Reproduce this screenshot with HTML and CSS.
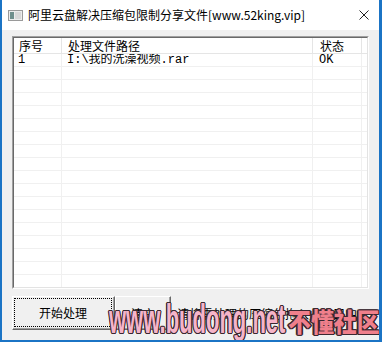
FILE: index.html
```html
<!DOCTYPE html>
<html lang="zh-CN">
<head>
  <meta charset="UTF-8">
  <title>阿里云盘解决压缩包限制分享文件</title>
  <link rel="stylesheet" href="styles.css">
</head>
<body>
  <div class="window">
    <div class="titlebar">
      <svg class="app-icon" width="15" height="11" viewBox="0 0 15 11">
        <rect x="0.5" y="0.5" width="14" height="10" fill="#ececec" stroke="#9a9a9a"/>
        <rect x="2" y="2" width="4" height="7" fill="#6f8f8c"/>
        <rect x="7" y="2" width="6" height="7" fill="#d8d8d8"/>
      </svg>
      <span class="title">阿里云盘解决压缩包限制分享文件[www.52king.vip]</span>
      <svg class="close" width="10" height="10" viewBox="0 0 10 10">
        <path d="M0.5 0.5 L9.5 9.5 M9.5 0.5 L0.5 9.5" stroke="#222" stroke-width="1"/>
      </svg>
    </div>

    <div class="client">
      <div class="listview">
        <div class="lv-frame">
          <div class="lv-head">
            <div class="cell c-no">序号</div>
            <div class="cell c-path">处理文件路径</div>
            <div class="cell c-state">状态</div>
          </div>
          <div class="lv-body">
            <div class="row">
              <div class="cell c-no">1</div>
              <div class="cell c-path">I:\我的洗澡视频.rar</div>
              <div class="cell c-state">OK</div>
            </div>
          </div>
        </div>
      </div>

      <div class="footer">
        <button class="btn btn-default"><span class="focus">开始处理</span></button>
        <button class="btn btn-clear">清空</button>
        <span class="hint">请将需处理的压缩包拖入此窗口中</span>
      </div>
    </div>

    <div class="wm wm-url">www.budong.net</div>
    <div class="wm wm-name">不懂社区</div>
  </div>
</body>
</html>
```

FILE: styles.css
```css
body {
  margin: 0;
  background: #fff;
}

.window {
  position: relative;
  width: 382px;
  height: 342px;
  box-sizing: border-box;
  border-left: 2px solid #1b74c5;
  border-right: 3px solid #1b74c5;
  border-bottom: 2px solid #1b74c5;
  background: #f0f0f0;
  display: flex;
  flex-direction: column;
  font-family: "Noto Sans CJK SC", sans-serif;
  font-size: 12px;
  color: #000;
  overflow: hidden;
}

.titlebar {
  height: 30px;
  background: #fff;
  display: flex;
  align-items: center;
  padding-left: 6px;
}

.app-icon {
  margin-right: 5px;
}

.title {
  font-size: 12px;
  line-height: 16px;
  white-space: nowrap;
}

.close {
  margin-left: auto;
  margin-right: 10px;
}

.client {
  flex: 1;
  padding: 6px 10px 0;
  display: flex;
  flex-direction: column;
}

/* list view, sunken 3d frame */
.listview {
  height: 253px;
  box-sizing: border-box;
  border: 1px solid;
  border-color: #a0a0a0 #fff #fff #a0a0a0;
}

.lv-frame {
  height: 100%;
  box-sizing: border-box;
  border: 1px solid;
  border-color: #696969 #e3e3e3 #e3e3e3 #696969;
  background: #fff;
  display: flex;
  flex-direction: column;
}

.lv-head {
  display: flex;
  height: 16px;
  box-sizing: border-box;
  border-bottom: 1px solid #e5e5e5;
}

.lv-head .cell {
  border-right: 1px solid #e5e5e5;
  line-height: 15px;
  font-size: 12px;
  overflow: visible;
}

.lv-body {
  flex: 1;
  background:
    linear-gradient(to right, transparent 47px, #f0f0f0 47px 48px, transparent 48px 298px, #f0f0f0 298px 299px, transparent 299px 347px, #f0f0f0 347px 348px, transparent 348px),
    repeating-linear-gradient(to bottom, #fff 0 12px, #f0f0f0 12px 13px);
}

.row {
  display: flex;
  height: 13px;
  line-height: 13px;
}

.cell {
  box-sizing: border-box;
  white-space: nowrap;
  overflow: hidden;
}

.c-no {
  width: 48px;
  padding-left: 4px;
}

.c-path {
  width: 251px;
  padding-left: 5px;
}

.c-state {
  width: 49px;
  padding-left: 6px;
}

.lv-head .c-no { padding-left: 5px; }
.lv-head .c-path { padding-left: 6px; }
.lv-head .c-state { padding-left: 7px; }

.row .cell {
  font-family: "Liberation Mono", "Noto Sans CJK SC", monospace;
}

.footer {
  display: flex;
  align-items: center;
  margin-top: 7px;
}

.btn {
  height: 34px;
  box-sizing: border-box;
  background: #f0f0f0;
  font-family: "Noto Sans CJK SC", sans-serif;
  font-size: 12px;
  color: #000;
  border: 1px solid;
  border-color: #fff #696969 #696969 #fff;
  box-shadow: inset -1px -1px 0 #a0a0a0;
  padding: 0;
}

.btn-default {
  width: 103px;
  padding: 2px 3px 3px 2px;
}

.focus {
  display: flex;
  align-items: center;
  justify-content: center;
  height: 100%;
  outline: 1px dotted #000;
}

.btn-clear {
  width: 56px;
}

.hint {
  margin-left: 6px;
  white-space: nowrap;
}

/* watermark stamped over the shot */
.wm {
  position: absolute;
  white-space: nowrap;
  transform-origin: left top;
  text-shadow:
    1px 0 #3a2830, -1px 0 #3a2830, 0 1px #3a2830, 0 -1px #3a2830,
    1px 1px #3a2830, -1px -1px #3a2830, 1px -1px #3a2830, -1px 1px #3a2830,
    2px 0 #3a2830, -2px 0 #3a2830;
}

.wm-url {
  left: 107px;
  top: 299px;
  font-family: "Liberation Sans", sans-serif;
  font-weight: bold;
  font-size: 40px;
  line-height: 40px;
  color: #f5b4c9;
  transform: scaleX(0.55);
}

.wm-name {
  left: 286px;
  top: 308px;
  font-family: "Noto Sans CJK SC", sans-serif;
  font-weight: 900;
  font-size: 26px;
  line-height: 26px;
  color: #ef7f8b;
  transform: scaleX(0.88);
}
```
